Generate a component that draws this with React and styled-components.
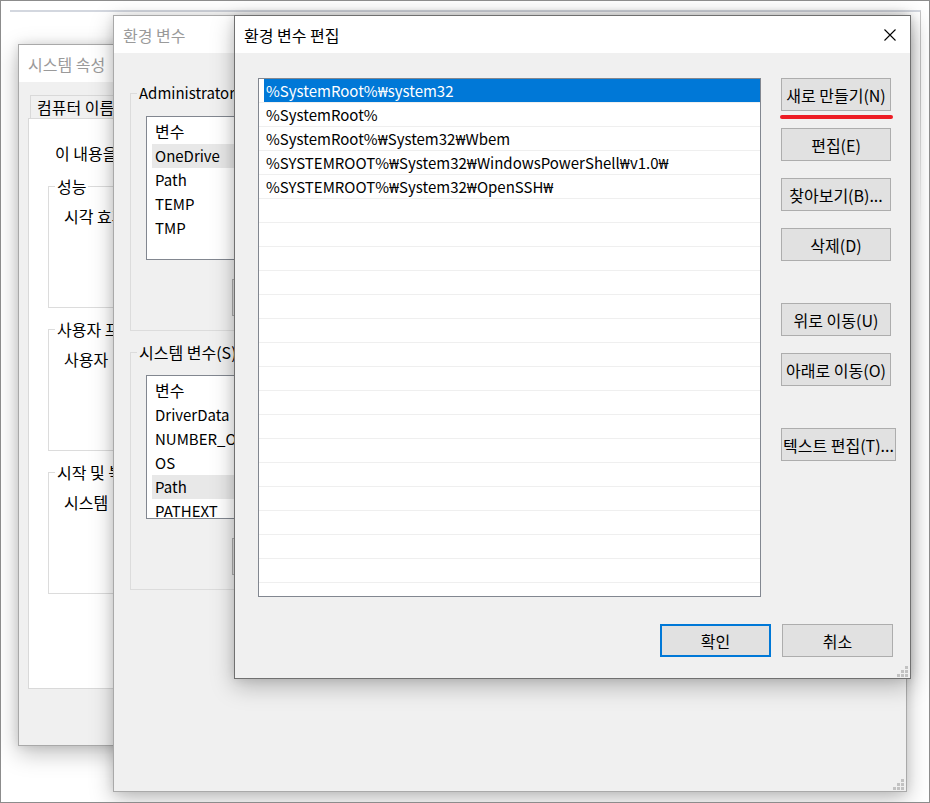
import React from "react";
import styled, { createGlobalStyle } from "styled-components";

const FONT = `"Noto Sans CJK KR", "Noto Sans", sans-serif`;

const GlobalStyle = createGlobalStyle`
  html, body {
    margin: 0;
    padding: 0;
    background: #fff;
  }
  * {
    box-sizing: border-box;
  }
`;

const Desktop = styled.div`
  position: relative;
  width: 930px;
  height: 803px;
  border: 1px solid #8c8c8c;
  background: #fff;
  overflow: hidden;
  font-family: ${FONT};
  font-size: 16px;
  line-height: 20px;
  color: #000;
`;

// faint edge of a window far behind everything
const Backdrop = styled.div`
  position: absolute;
  left: 9px;
  top: 9px;
  width: 911px;
  height: 220px;
  border-top: 2px solid #d3d7df;
  border-right: 1px solid #c6c6c6;
  -webkit-mask-image: linear-gradient(to bottom, #000 35%, transparent);
  mask-image: linear-gradient(to bottom, #000 35%, transparent);
`;

const Window = styled.div`
  position: absolute;
  left: ${(p) => p.$x - 1}px;
  top: ${(p) => p.$y - 1}px;
  width: ${(p) => p.$w}px;
  height: ${(p) => p.$h}px;
  display: flex;
  flex-direction: column;
  background: #f0f0f0;
  border: 1px solid ${(p) => (p.$active ? "#707070" : "#a9a9a9")};
  box-shadow: 0 7px 22px rgba(0, 0, 0, 0.26), 0 0 9px rgba(0, 0, 0, 0.1);
  overflow: hidden;
`;

const TitleBar = styled.div`
  flex-shrink: 0;
  height: 37px;
  display: flex;
  align-items: center;
  padding-left: 9px;
  background: #fff;
  white-space: nowrap;
  color: ${(p) => (p.$inactive ? "#9a9a9a" : "#000")};
`;

const CloseBox = styled.div`
  margin-left: auto;
  margin-right: 14px;
  width: 12px;
  height: 12px;
  display: flex;
`;

const GripBox = styled.div`
  position: absolute;
  right: 2px;
  bottom: 1px;
  width: 11px;
  height: 11px;
  display: flex;
`;

const Grip = () => (
  <GripBox>
    <svg width="11" height="11" viewBox="0 0 11 11">
      {[
        [8, 0],
        [4, 4],
        [8, 4],
        [0, 8],
        [4, 8],
        [8, 8],
      ].map(([x, y]) => (
        <rect key={`${x}-${y}`} x={x} y={y} width="3" height="3" fill="#c2c2c2" />
      ))}
    </svg>
  </GripBox>
);

/* ---------- group boxes ---------- */

const Group = styled.fieldset`
  margin: ${(p) => p.$gap || 0}px 0 0 0;
  padding: 0;
  min-width: 0;
  width: ${(p) => (p.$w ? `${p.$w}px` : "auto")};
  height: ${(p) => (p.$h ? `${p.$h}px` : "auto")};
  border: 1px solid #dcdcdc;
`;

const Legend = styled.legend`
  margin-left: 6px;
  padding: 0 2px;
  white-space: nowrap;
  overflow: hidden;
  max-width: ${(p) => (p.$max ? `${p.$max}px` : "none")};
  font-size: ${(p) => (p.$latin ? 15 : 16)}px;
`;

const GroupBody = styled.div`
  padding: ${(p) => p.$pad};
  white-space: nowrap;
`;

/* ---------- system properties ---------- */

const SysBody = styled.div`
  flex: 1;
  display: flex;
  flex-direction: column;
  padding: 13px 0 0 9px;
`;

const Tabs = styled.div`
  display: flex;
  margin-left: 2px;
`;

const Tab = styled.div`
  height: 24px;
  padding: 1px 6px 0 6px;
  border: 1px solid #d9d9d9;
  border-bottom: none;
  background: #f0f0f0;
  white-space: nowrap;
`;

const TabPanel = styled.div`
  height: 571px;
  margin-top: -1px;
  padding: 24px 0 0 19px;
  border: 1px solid #d9d9d9;
  border-right: none;
  background: #fff;
  display: flex;
  flex-direction: column;
`;

const Intro = styled.div`
  padding-left: 7px;
  white-space: nowrap;
`;

/* ---------- environment variables ---------- */

const EnvBody = styled.div`
  flex: 1;
  padding: 30px 16px 0 16px;
  display: flex;
  flex-direction: column;
`;

const VarList = styled.div`
  width: 200px;
  height: 144px;
  border: 1px solid #828790;
  background: #fff;
  overflow: hidden;
`;

const VarHeader = styled.div`
  height: 27px;
  display: flex;
  align-items: center;
  padding-left: 8px;
`;

const VarRow = styled.div`
  height: 24px;
  display: flex;
  align-items: center;
  margin-left: 5px;
  padding-left: 3px;
  font-size: 15px;
  background: ${(p) => (p.$hot ? "#e8e8e8" : "transparent")};
  white-space: nowrap;
`;

const Button = styled.button`
  width: ${(p) => p.$w || 110}px;
  height: ${(p) => p.$h || 33}px;
  margin: ${(p) => p.$m || 0};
  padding: 0;
  flex-shrink: 0;
  font-family: ${FONT};
  font-size: 16px;
  line-height: 20px;
  color: #000;
  background: #e1e1e1;
  border: ${(p) => (p.$default ? "2px solid #0078d7" : "1px solid #adadad")};
  white-space: nowrap;
  overflow: hidden;
  cursor: default;
`;

/* ---------- edit dialog ---------- */

const EditBody = styled.div`
  flex: 1;
  padding: 25px 17px 0 23px;
  display: flex;
  flex-direction: column;
`;

const EditMain = styled.div`
  display: flex;
  gap: 20px;
  align-items: flex-start;
`;

const PathList = styled.div`
  flex-shrink: 0;
  width: 503px;
  height: 519px;
  border: 1px solid #828790;
  background: #fff;
  overflow: hidden;
`;

const PathRow = styled.div`
  height: 24px;
  display: flex;
  border-bottom: 1px solid #efefef;
`;

const PathItem = styled.div`
  flex: 1;
  margin-left: 5px;
  padding-left: 2px;
  display: flex;
  align-items: center;
  white-space: nowrap;
  font-size: 15px;
  background: ${(p) => (p.$selected ? "#0078d7" : "transparent")};
  color: ${(p) => (p.$selected ? "#fff" : "#000")};
`;

// the backslash shows as a narrow won sign in the Korean UI font
const Won = styled.span`
  font-family: "Noto Sans", "Noto Sans CJK KR", sans-serif;
`;

const ButtonColumn = styled.div`
  flex-shrink: 0;
  display: flex;
  flex-direction: column;
  align-items: flex-start;
  gap: 17px;
`;

const Spacer = styled.div`
  height: ${(p) => p.$h}px;
  flex-shrink: 0;
`;

const Marked = styled.div`
  position: relative;
  display: flex;
`;

const RedMark = styled.div`
  position: absolute;
  left: -1px;
  top: 37px;
  width: 113px;
  height: 4px;
  border-radius: 2px;
  background: #ed1c24;
`;

const Footer = styled.div`
  display: flex;
  justify-content: flex-end;
  gap: 11px;
  margin-top: 27px;
`;

const paths = [
  "%SystemRoot%₩system32",
  "%SystemRoot%",
  "%SystemRoot%₩System32₩Wbem",
  "%SYSTEMROOT%₩System32₩WindowsPowerShell₩v1.0₩",
  "%SYSTEMROOT%₩System32₩OpenSSH₩",
];

const userVars = ["OneDrive", "Path", "TEMP", "TMP"];
const sysVars = ["DriverData", "NUMBER_OF_PROCESSORS", "OS", "Path", "PATHEXT"];

const PathText = ({ value }) =>
  value.split("₩").map((part, i) => (
    <React.Fragment key={i}>
      {i > 0 && <Won>₩</Won>}
      {part}
    </React.Fragment>
  ));

const CloseIcon = () => (
  <CloseBox>
    <svg width="12" height="12" viewBox="0 0 12 12">
      <path d="M0.5 0.5 L11.5 11.5 M11.5 0.5 L0.5 11.5" stroke="#000" strokeWidth="1.1" fill="none" />
    </svg>
  </CloseBox>
);

const App = () => {
  const rows = Array.from({ length: 22 }, (_, i) => paths[i] || "");

  return (
    <Desktop>
      <GlobalStyle />
      <Backdrop />

      {/* only the strip left of the next window shows */}
      <Window $x={18} $y={44} $w={116} $h={702}>
        <TitleBar $inactive>시스템 속성</TitleBar>
        <SysBody>
          <Tabs>
            <Tab>컴퓨터 이름</Tab>
          </Tabs>
          <TabPanel>
            <Intro>이 내용을</Intro>
            <Group $gap={13} $h={132}>
              <Legend>성능</Legend>
              <GroupBody $pad="10px 0 0 15px">시각 효과</GroupBody>
            </Group>
            <Group $gap={11} $h={132}>
              <Legend>사용자 프로필</Legend>
              <GroupBody $pad="10px 0 0 15px">사용자</GroupBody>
            </Group>
            <Group $gap={11} $h={132}>
              <Legend>시작 및 복구</Legend>
              <GroupBody $pad="10px 0 0 15px">시스템</GroupBody>
            </Group>
          </TabPanel>
        </SysBody>
      </Window>

      <Window $x={113} $y={15} $w={794} $h={777}>
        <TitleBar $inactive>환경 변수</TitleBar>
        <EnvBody>
          <Group $w={134}>
            <Legend $latin $max={100}>
              Administrator에 대한 사용자 변수(U)
            </Legend>
            <GroupBody $pad="13px 0 14px 15px">
              <VarList>
                <VarHeader>변수</VarHeader>
                {userVars.map((v, i) => (
                  <VarRow key={v} $hot={i === 0}>
                    {v}
                  </VarRow>
                ))}
              </VarList>
              <Button $w={90} $h={37} $m="19px 0 0 86px">새로</Button>
            </GroupBody>
          </Group>
          <Group $w={134} $gap={11}>
            <Legend>시스템 변수(S)</Legend>
            <GroupBody $pad="13px 0 14px 15px">
              <VarList>
                <VarHeader>변수</VarHeader>
                {sysVars.map((v, i) => (
                  <VarRow key={v + i} $hot={i === 3}>
                    {v}
                  </VarRow>
                ))}
              </VarList>
              <Button $w={90} $h={37} $m="19px 0 0 86px">새로</Button>
            </GroupBody>
          </Group>
        </EnvBody>
        <Grip />
      </Window>

      <Window $x={234} $y={15} $w={677} $h={664} $active>
        <TitleBar>
          환경 변수 편집
          <CloseIcon />
        </TitleBar>
        <EditBody>
          <EditMain>
            <PathList>
              {rows.map((p, i) => (
                <PathRow key={i}>
                  <PathItem $selected={i === 0}>
                    <PathText value={p} />
                  </PathItem>
                </PathRow>
              ))}
            </PathList>
            <ButtonColumn>
              <Marked>
                <Button>새로 만들기(N)</Button>
                <RedMark />
              </Marked>
              <Button>편집(E)</Button>
              <Button>찾아보기(B)...</Button>
              <Button>삭제(D)</Button>
              <Spacer $h={8} />
              <Button>위로 이동(U)</Button>
              <Button>아래로 이동(O)</Button>
              <Spacer $h={8} />
              <Button $w={115}>텍스트 편집(T)...</Button>
            </ButtonColumn>
          </EditMain>
          <Footer>
            <Button $w={111} $default>
              확인
            </Button>
            <Button $w={111}>취소</Button>
          </Footer>
        </EditBody>
        <Grip />
      </Window>
    </Desktop>
  );
};

export default App;
